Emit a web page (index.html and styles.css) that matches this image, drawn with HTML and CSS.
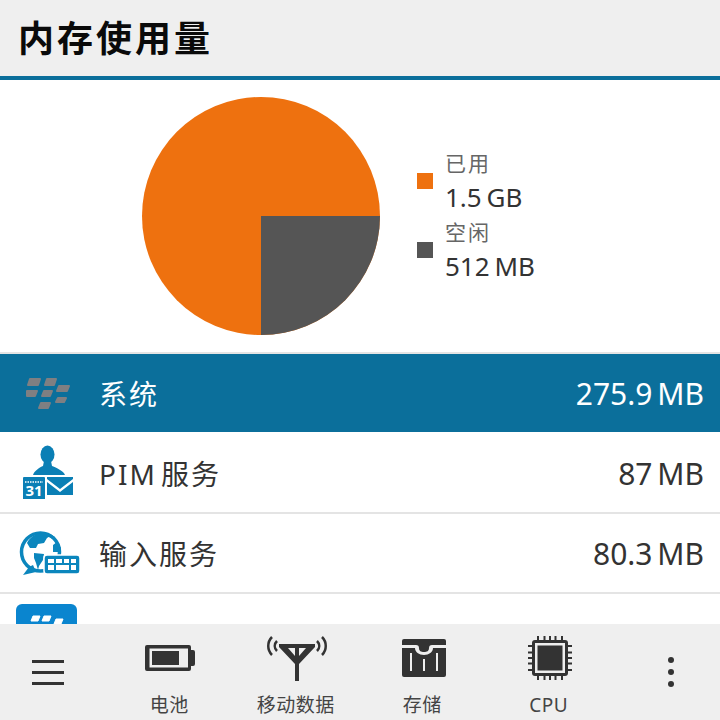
FILE: index.html
```html
<!DOCTYPE html>
<html lang="zh-CN">
<head>
<meta charset="UTF-8" />
<meta name="viewport" content="width=device-width, initial-scale=1" />
<title>内存使用量</title>
<link rel="stylesheet" href="styles.css">
</head>
<body>
  <div id="page">
    <header class="title-bar"><h1>内存使用量</h1></header>

    <main class="content">
      <section class="chart">
        <svg class="pie" width="238" height="238" viewBox="0 0 238 238" aria-label="Memory pie chart">
          <circle cx="119" cy="119" r="119" fill="#ee710f" />
          <path d="M119 119H238A119 119 0 0 1 119 238Z" fill="#555555" />
        </svg>
        <ul class="legend">
          <li class="legend-item">
            <span class="swatch swatch-used"></span>
            <div><div class="legend-label">已用</div><div class="legend-value">1.5 GB</div></div>
          </li>
          <li class="legend-item">
            <span class="swatch swatch-free"></span>
            <div><div class="legend-label">空闲</div><div class="legend-value">512 MB</div></div>
          </li>
        </ul>
      </section>

      <ul class="process-list">
        <li class="row row-active">
          <svg class="row-icon" width="64" height="64" viewBox="0 0 64 64" fill="#7f7f82" stroke="#7f7f82" stroke-width="2" stroke-linejoin="round">
            <path d="M14 18h10l-2 6H12ZM31 18h9l-2 6h-9ZM11 30h10l-2 5H11ZM28 30h8l-2 5h-8ZM43 25h10l-2 5H41ZM42 37h8l-2 4h-8ZM25 42h9l-2 5h-9Z" />
          </svg>
          <span class="row-name">系统</span>
          <span class="row-value">275.9 MB</span>
        </li>
        <li class="row">
          <svg class="row-icon" width="64" height="64" viewBox="0 0 64 64" fill="#0b7fb5">
            <ellipse cx="31.500" cy="13.500" rx="7" ry="9" />
            <path d="M17 34c1-4 7-8 10-9l1-5h7l1 5c3 1 12 5 13 9Z" />
            <path d="M8 36h20a1 1 0 0 1 1 1v21H7V37a1 1 0 0 1 1-1Z" />
            <path d="M31 36h26v2L44 48 31 38ZM31 41l13 10 13-10v13H31Z" />
            <path d="M9 41h18" stroke="#fff" stroke-width="1.500" stroke-dasharray="1.500 1" />
            <text class="cal-day" x="18" y="55" text-anchor="middle">31</text>
          </svg>
          <span class="row-name">PIM 服务</span>
          <span class="row-value">87 MB</span>
        </li>
        <li class="row">
          <svg class="row-icon" width="64" height="64" viewBox="0 0 64 64">
            <circle cx="24.500" cy="31" r="19" fill="#fff" stroke="#0b86bd" stroke-width="3.500" />
            <path d="M13 46l-6 8 13-3-3-7Z" fill="#0b86bd" />
            <path d="M11 22C14 15 23 11 31 12l5 2-5 3-3 5-6 1-2 4h-6ZM18 32l10 1-1 6-4 6-1 4-2-7-2-5ZM37 24l4-3 4 6-1 4h-7ZM34 13l5 3-2 2-4-2Z" fill="#0b86bd" />
            <rect x="28" y="34" width="36" height="19" rx="3" fill="#0b86bd" stroke="#fff" stroke-width="1.500" />
            <path d="M32 38h6v4h-6ZM40 38h6v4h-6ZM48 38h5v4h-5ZM55 38h5v4h-5ZM32 44h6v5h-6ZM40 44h13v5H40ZM55 44h5v5h-5Z" fill="#fff" />
          </svg>
          <span class="row-name">输入服务</span>
          <span class="row-value">80.3 MB</span>
        </li>
        <li class="row row-cut">
          <svg class="row-icon" width="64" height="64" viewBox="0 0 64 64">
            <rect x="0" y="0" width="61" height="61" rx="6" fill="#0a85cf" />
            <path d="M17 12h7l-2 5h-7ZM28 12h7l-2 5h-7ZM40 15h7l-2 5h-7Z" fill="#fff" stroke="#fff" stroke-linejoin="round" />
          </svg>
        </li>
      </ul>
    </main>

    <nav class="action-bar">
      <div class="action action-menu">
        <svg width="32" height="25" viewBox="0 0 32 25" fill="#333">
          <path d="M0 0h32v3H0ZM0 11h32v3H0ZM0 22h32v3H0Z" />
        </svg>
      </div>
      <div class="action">
        <div class="action-icon">
          <svg class="icon-nudge-sm" width="50" height="26" viewBox="0 0 50 26" fill="#333">
            <path fill-rule="evenodd" d="M2 0h42a2 2 0 0 1 2 2v3h2a2 2 0 0 1 2 2v12a2 2 0 0 1-2 2h-2v3a2 2 0 0 1-2 2H2a2 2 0 0 1-2-2V2a2 2 0 0 1 2-2ZM4.500 3.500V22.500H43V3.500Z" />
            <path d="M7 6h27v14H7Z" />
          </svg>
        </div>
        <span class="action-label">电池</span>
      </div>
      <div class="action">
        <div class="action-icon">
          <svg class="icon-nudge-sm" width="60" height="46" viewBox="0 0 60 46" fill="none" stroke="#333">
            <path fill="#333" stroke="none" fill-rule="evenodd" d="M12 9h36v3L32 29v17h-4V29L12 12ZM21 13l7 8v-8ZM32 13v8l7-8Z" />
            <path d="M5 2C0 7 0 15 5 20M10 6C7 9 7 13 10 16M55 2c5 5 5 13 0 18M50 6c3 3 3 7 0 10" stroke-width="2.500" />
          </svg>
        </div>
        <span class="action-label">移动数据</span>
      </div>
      <div class="action">
        <div class="action-icon">
          <svg class="icon-nudge" width="44" height="38" viewBox="0 0 44 38" fill="#333">
            <rect width="44" height="38" rx="2" />
            <path d="M0 6h14c2 0 3 1 3 3 0 3 2 4 5 4s5-1 5-4c0-2 1-3 3-3h14v3H31c0 4-4 7-9 7s-9-3-9-7H0ZM8 14h2v18H8ZM21 20h2v12h-2ZM34 14h2v18h-2Z" fill="#efefef" />
          </svg>
        </div>
        <span class="action-label">存储</span>
      </div>
      <div class="action">
        <div class="action-icon">
          <svg class="icon-nudge" width="44" height="44" viewBox="0 0 44 44" fill="#333">
            <path d="M7 4h30a3 3 0 0 1 3 3v30a3 3 0 0 1-3 3H7a3 3 0 0 1-3-3V7a3 3 0 0 1 3-3Z" />
            <path d="M7 7h30v30H7Z" fill="#efefef" />
            <path d="M9.500 9.500h25v25h-25Z" />
            <path d="M10 0v4M16.500 0v4M22 0v4M27.500 0v4M34 0v4M10 40v4M16.500 40v4M22 40v4M27.500 40v4M34 40v4M0 10h4M0 16.500h4M0 22h4M0 27.500h4M0 34h4M40 10h4M40 16.500h4M40 22h4M40 27.500h4M40 34h4" stroke="#333" stroke-width="2" />
          </svg>
        </div>
        <span class="action-label">CPU</span>
      </div>
      <div class="action action-more">
        <span class="dot"></span>
        <span class="dot"></span>
        <span class="dot"></span>
      </div>
    </nav>
  </div>
</body>
</html>
```

FILE: styles.css
```css
/* Reset */
* {
  box-sizing: border-box;
}
html, body {
  margin: 0;
  padding: 0;
}
body {
  background: #fff;
  font-family: 'Noto Sans', 'Noto Sans CJK SC', sans-serif;
  color: #333;
}
ul {
  margin: 0;
  padding: 0;
  list-style: none;
}
#page {
  width: 720px;
  height: 720px;
  display: flex;
  flex-direction: column;
  overflow: hidden;
}

/* Title */
.title-bar {
  height: 80px;
  flex: none;
  background: #efefef;
  border-bottom: 4px solid #0b6f9b;
  padding: 0 0 3px 18px;
  display: flex;
  align-items: center;
}
.title-bar h1 {
  margin: 0;
  font-size: 36px;
  font-weight: 700;
  letter-spacing: 3px;
  color: #0a0a0a;
}

/* Chart */
.content {
  flex: 1;
  min-height: 0;
  overflow: hidden;
}
.chart {
  height: 272px;
  padding-left: 142px;
  display: flex;
  align-items: center;
}
.legend {
  margin-left: 37px;
  display: flex;
  flex-direction: column;
  gap: 2px;
}
.legend-item {
  display: flex;
  align-items: center;
  gap: 13px;
}
.swatch {
  width: 16px;
  height: 16px;
  margin-bottom: 2px;
}
.swatch-used {
  background: #ee710f;
}
.swatch-free {
  background: #555;
}
.legend-label {
  font-size: 21px;
  line-height: 31px;
  letter-spacing: 2px;
  margin-left: -1px;
  color: #666;
}
.legend-value {
  font-size: 26px;
  line-height: 36px;
  word-spacing: -2px;
  margin-left: -1px;
  color: #333;
}

/* Rows */
.process-list {
  border-top: 2px solid #e4e4e4;
}
.row {
  height: 80px;
  padding: 0 16px;
  display: flex;
  align-items: center;
  border-bottom: 2px solid #e4e4e4;
  font-size: 28px;
}
.row-active {
  background: #0b6f9b;
  color: #fff;
  border-bottom-color: #fff;
}
.row-cut {
  align-items: flex-start;
  padding-top: 10px;
}
.row-icon {
  flex: none;
  margin-right: 19px;
}
.row-name {
  flex: 1;
  letter-spacing: 2px;
  word-spacing: -5px;
}
.row-value {
  font-size: 30px;
  word-spacing: -3px;
}
.cal-day {
  font-size: 15px;
  font-weight: 700;
  fill: #fff;
}

/* Bottom bar */
.action-bar {
  height: 96px;
  flex: none;
  background: #efefef;
  display: flex;
}
.action {
  width: 126.500px;
  display: flex;
  flex-direction: column;
  align-items: center;
  justify-content: flex-end;
  padding-bottom: 1px;
}
.action-icon {
  height: 58px;
  margin-bottom: 4px;
  display: flex;
  align-items: center;
  justify-content: center;
}
.icon-nudge {
  margin-left: 3px;
}
.icon-nudge-sm {
  margin-left: 2px;
}
.action-label {
  font-size: 19px;
  line-height: 28px;
  letter-spacing: 0.500px;
  color: #444;
}
.action-menu {
  width: 106px;
  justify-content: center;
  padding: 0 10px 0 0;
}
.action-more {
  width: 108px;
  padding: 0 0 0 10px;
  justify-content: center;
  gap: 6px;
}
.dot {
  width: 6px;
  height: 6px;
  border-radius: 50%;
  background: #333;
}
```
